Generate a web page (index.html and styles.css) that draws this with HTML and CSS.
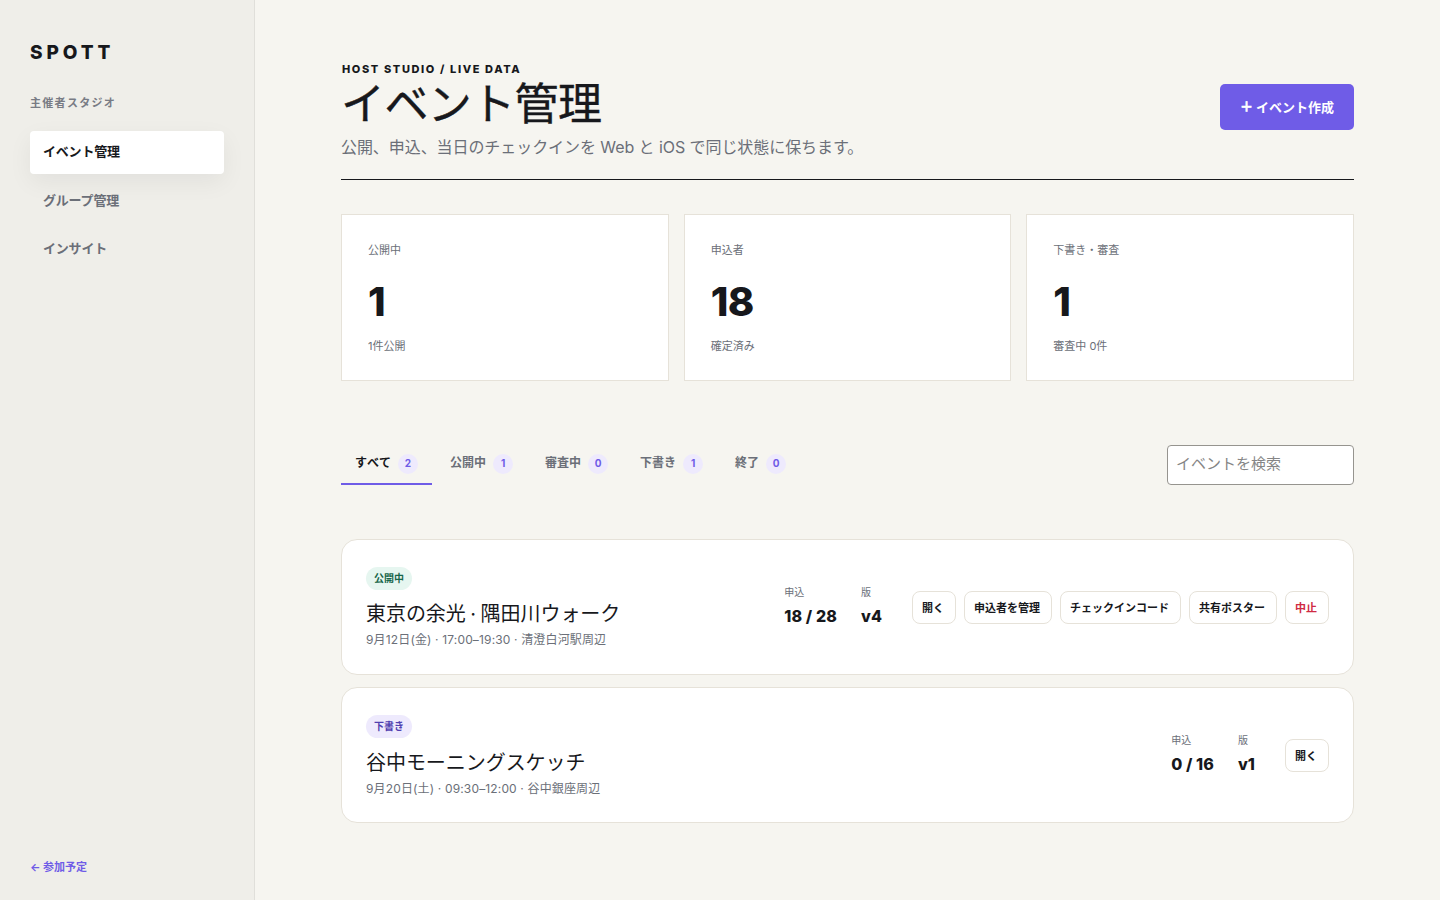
FILE: index.html
```html
<!DOCTYPE html>
<html lang="ja">
<head>
<meta charset="utf-8">
<title>イベント管理 | SPOTT</title>
<link rel="stylesheet" href="styles.css">
</head>
<body>
<div class="shell">
  <aside class="sidebar">
    <div class="brand">SPOTT</div>
    <p class="studio">主催者スタジオ</p>
    <nav class="nav">
      <a class="nav-item current">イベント管理</a>
      <a class="nav-item">グループ管理</a>
      <a class="nav-item">インサイト</a>
    </nav>
    <a class="back">← 参加予定</a>
  </aside>
  <main class="main">
    <header class="head">
      <div>
        <p class="eyebrow">HOST STUDIO / LIVE DATA</p>
        <h1 class="title">イベント管理</h1>
        <p class="lead">公開、申込、当日のチェックインを Web と iOS で同じ状態に保ちます。</p>
      </div>
      <button class="create"><span class="plus">＋</span>イベント作成</button>
    </header>
    <section class="stats">
      <div class="stat"><span>公開中</span><strong>1</strong><small>1件公開</small></div>
      <div class="stat"><span>申込者</span><strong>18</strong><small>確定済み</small></div>
      <div class="stat"><span>下書き・審査</span><strong>1</strong><small>審査中 0件</small></div>
    </section>
    <div class="toolbar">
      <div class="tabs">
        <a class="tab active">すべて<b>2</b></a>
        <a class="tab">公開中<b>1</b></a>
        <a class="tab">審査中<b>0</b></a>
        <a class="tab">下書き<b>1</b></a>
        <a class="tab">終了<b>0</b></a>
      </div>
      <input class="search" placeholder="イベントを検索">
    </div>
    <section class="events">
      <article class="event">
        <div class="info">
          <span class="badge live">公開中</span>
          <h2 class="name">東京の余光 · 隅田川ウォーク</h2>
          <p class="when">9月12日(金) · 17:00–19:30 · 清澄白河駅周辺</p>
        </div>
        <dl class="meta"><div><dt>申込</dt><dd>18 / 28</dd></div><div><dt>版</dt><dd>v4</dd></div></dl>
        <div class="actions"><button class="btn">開く</button><button class="btn">申込者を管理</button><button class="btn">チェックインコード</button><button class="btn">共有ポスター</button><button class="btn danger">中止</button></div>
      </article>
      <article class="event">
        <div class="info">
          <span class="badge draft">下書き</span>
          <h2 class="name">谷中モーニングスケッチ</h2>
          <p class="when">9月20日(土) · 09:30–12:00 · 谷中銀座周辺</p>
        </div>
        <dl class="meta"><div><dt>申込</dt><dd>0 / 16</dd></div><div><dt>版</dt><dd>v1</dd></div></dl>
        <div class="actions"><button class="btn">開く</button></div>
      </article>
    </section>
  </main>
</div>
</body>
</html>
```
FILE: styles.css
```css
* { box-sizing: border-box; margin: 0; padding: 0; }
body { background: #f6f5f0; color: #17181c; font-family: Inter, "Noto Sans CJK JP", sans-serif; }
button, input { font-family: inherit; color: inherit; }
.shell { display: grid; grid-template-columns: 255px 1fr; height: 900px; overflow: hidden; }
.sidebar { display: flex; flex-direction: column; background: #efeee9; border-right: 1px solid #e0dfda; padding: 40px 30px 24px; }
.brand { font-size: 19px; line-height: 25px; font-weight: 800; letter-spacing: 3.9px; }
.studio { margin-top: 29px; font-size: 11px; line-height: 18px; font-weight: 700; letter-spacing: 1.3px; color: #787b84; }
.nav { display: grid; gap: 5px; margin-top: 19px; }
.nav-item { height: 43px; padding: 0 13px; border-radius: 4px; font-size: 13px; line-height: 43px; font-weight: 700; letter-spacing: -.2px; color: #6b6f78; }
.current { background: #fff; color: #17181c; line-height: 41px; box-shadow: 0 8px 24px rgba(24, 24, 27, .06); }
.back { margin-top: auto; font-size: 11px; line-height: 18px; font-weight: 700; color: #6f5ce7; }
.main { padding: 62px 86px 0; }
.head { display: flex; justify-content: space-between; align-items: flex-start; height: 118px; border-bottom: 1px solid #17181c; }
.eyebrow { padding-left: 1px; font-size: 11px; line-height: 14px; font-weight: 800; letter-spacing: 1.62px; }
.title { margin-top: 3px; font-size: 44px; line-height: 50px; font-weight: 400; letter-spacing: -.6px; -webkit-text-stroke: .4px currentColor; }
.lead { margin-top: 5px; font-size: 16px; line-height: 26px; letter-spacing: -.07px; color: #6b6f78; }
.create { display: flex; justify-content: center; align-items: center; gap: 3px; width: 134px; height: 46px; margin-top: 22px; padding-bottom: 2px; border: 0; border-radius: 5px; background: #6f5ce7; color: #fff; font-size: 13px; font-weight: 700; }
.plus { line-height: 18px; -webkit-text-stroke: .6px currentColor; }
.stats { display: grid; grid-template-columns: repeat(3, 1fr); gap: 15px; margin-top: 34px; }
.stat { display: flex; flex-direction: column; height: 167px; padding: 26px; background: #fff; border: 1px solid #e6e2d9; }
.stat span, .stat small { font-size: 11px; line-height: 18px; color: #6b6f78; }
.stat strong { margin: 19px 0 11px; font-size: 40px; line-height: 48px; font-weight: 800; letter-spacing: -.6px; }
.toolbar { display: flex; justify-content: space-between; align-items: flex-end; height: 40px; margin-top: 64px; }
.tabs { display: flex; gap: 4px; }
.tab { display: flex; align-items: center; gap: 7px; height: 43px; padding: 0 14px 2px; border-bottom: 2px solid transparent; font-size: 12px; font-weight: 700; font-kerning: none; color: #6b6f78; }
.active { color: #17181c; border-color: #6f5ce7; }
.tab b { width: 20px; height: 20px; margin-top: 4px; border-radius: 10px; background: #eeeafd; color: #6f5ce7; font-size: 10px; line-height: 19px; font-weight: 750; text-align: center; }
.search { width: 187px; height: 40px; border: 1px solid #96948f; border-radius: 4px; background: #fff; padding: 0 8px 3px; font-size: 15px; }
.search::placeholder { color: #858585; }
.events { display: grid; gap: 12px; margin-top: 54px; }
.event { display: flex; align-items: center; height: 136px; padding: 0 24px; background: #fff; border: 1px solid #e6e2d9; border-radius: 16px; }
.info { flex: 1; padding-top: 3px; }
.badge { display: block; width: max-content; padding: 0 8px; border-radius: 12px; font-size: 10px; line-height: 23px; font-weight: 700; }
.live { background: #e6f6f0; color: #17664a; }
.draft { background: #eeeafd; color: #5140b0; }
.draft + .name { margin-top: 9px; }
.name { margin-top: 8px; font-size: 20px; line-height: 32px; font-weight: 400; word-spacing: -1px; letter-spacing: -.05px; }
.when { font-size: 12px; line-height: 20px; letter-spacing: .15px; color: #6b6f78; }
.meta { display: flex; gap: 24px; margin-right: 30px; }
.meta dt { font-size: 10px; line-height: 16px; color: #6b6f78; }
.meta dd { margin: 3px 0 1px; font-size: 16px; line-height: 26px; font-weight: 800; letter-spacing: .1px; }
.actions { display: flex; gap: 8px; }
.btn { height: 33px; padding: 0 11px 0 9px; border: 1px solid #e6e2d9; border-radius: 8px; background: #fff; font-size: 11px; font-weight: 700; }
.danger { color: #d02b43; }
```
